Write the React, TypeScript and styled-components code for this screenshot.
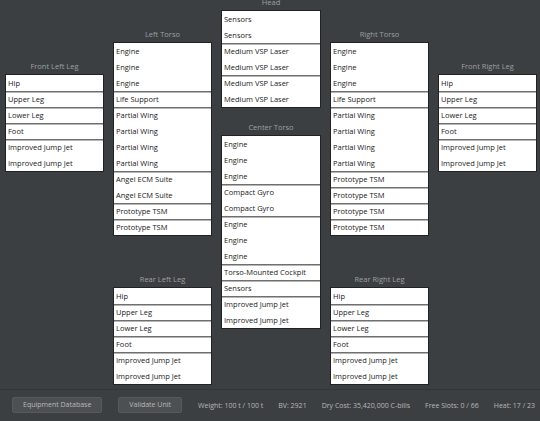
import styled, { createGlobalStyle } from 'styled-components';

type Group = [string, number];

interface Location {
  name: string;
  groups: Group[];
}

const legGroups: Group[] = [
  ['Hip', 1],
  ['Upper Leg', 1],
  ['Lower Leg', 1],
  ['Foot', 1],
  ['Improved Jump Jet', 2],
];

const columns: { offset: number; gap: number; locations: Location[] }[] = [
  {
    offset: 57,
    gap: 0,
    locations: [{ name: 'Front Left Leg', groups: legGroups }],
  },
  {
    offset: 25,
    gap: 35,
    locations: [
      {
        name: 'Left Torso',
        groups: [
          ['Engine', 3],
          ['Life Support', 1],
          ['Partial Wing', 4],
          ['Angel ECM Suite', 2],
          ['Prototype TSM', 1],
          ['Prototype TSM', 1],
        ],
      },
      { name: 'Rear Left Leg', groups: legGroups },
    ],
  },
  {
    offset: -7,
    gap: 11,
    locations: [
      {
        name: 'Head',
        groups: [
          ['Sensors', 2],
          ['Medium VSP Laser', 2],
          ['Medium VSP Laser', 2],
        ],
      },
      {
        name: 'Center Torso',
        groups: [
          ['Engine', 3],
          ['Compact Gyro', 2],
          ['Engine', 3],
          ['Torso-Mounted Cockpit', 1],
          ['Sensors', 1],
          ['Improved Jump Jet', 2],
        ],
      },
    ],
  },
  {
    offset: 25,
    gap: 35,
    locations: [
      {
        name: 'Right Torso',
        groups: [
          ['Engine', 3],
          ['Life Support', 1],
          ['Partial Wing', 4],
          ['Prototype TSM', 1],
          ['Prototype TSM', 1],
          ['Prototype TSM', 1],
          ['Prototype TSM', 1],
        ],
      },
      { name: 'Rear Right Leg', groups: legGroups },
    ],
  },
  {
    offset: 57,
    gap: 0,
    locations: [{ name: 'Front Right Leg', groups: legGroups }],
  },
];

const stats = [
  'Weight: 100 t / 100 t',
  'BV: 2921',
  'Dry Cost: 35,420,000 C-bills',
  'Free Slots: 0 / 66',
  'Heat: 17 / 23',
];

const App: React.FC = () => {
  return (
    <>
      <GlobalStyle />
      <Window>
        <Layout>
          {columns.map((col, ci) => (
            <Column key={ci} $offset={col.offset} $gap={col.gap}>
              {col.locations.map((loc) => (
                <Panel key={loc.name}>
                  <PanelTitle>{loc.name}</PanelTitle>
                  <SlotList>
                    {loc.groups.map(([label, count], gi) =>
                      Array.from({ length: count }).map((_, si) => (
                        <Slot key={`${gi}-${si}`} $groupStart={gi > 0 && si === 0}>
                          {label}
                        </Slot>
                      ))
                    )}
                  </SlotList>
                </Panel>
              ))}
            </Column>
          ))}
        </Layout>
        <StatusBar>
          <BarButton>Equipment Database</BarButton>
          <BarButton>Validate Unit</BarButton>
          {stats.map((s) => (
            <StatText key={s}>{s}</StatText>
          ))}
        </StatusBar>
      </Window>
    </>
  );
};

const GlobalStyle = createGlobalStyle`
  html, body {
    margin: 0;
    padding: 0;
    background: #3c3f41;
  }
  body {
    font-family: "Open Sans", "Noto Sans", sans-serif;
  }
`;

const Window = styled.div`
  width: 540px;
  height: 421px;
  background: #3c3f41;
  display: flex;
  flex-direction: column;
  overflow: hidden;
`;

const Layout = styled.div`
  flex: 1;
  display: grid;
  grid-template-columns: 97px 97px 98px 97px 97px;
  column-gap: 11px;
  padding-left: 6px;
  align-items: start;
  overflow: hidden;
`;

const Column = styled.div<{ $offset: number; $gap: number }>`
  display: flex;
  flex-direction: column;
  gap: ${(p) => p.$gap}px;
  margin-top: ${(p) => p.$offset}px;
`;

const Panel = styled.div`
  display: flex;
  flex-direction: column;
`;

const PanelTitle = styled.div`
  height: 18px;
  line-height: 18px;
  text-align: center;
  font-size: 7.5px;
  color: #9c9fa1;
`;

const SlotList = styled.div`
  background: #ffffff;
  box-shadow: 0 0 0 1px rgba(0, 0, 0, 0.45);
  display: flex;
  flex-direction: column;
`;

const Slot = styled.div<{ $groupStart: boolean }>`
  height: 16px;
  box-sizing: border-box;
  padding-left: 2px;
  font-size: 7.5px;
  color: #1a1a1a;
  white-space: nowrap;
  overflow: hidden;
  border-top: ${(p) => (p.$groupStart ? '1px solid #6f6f6f' : 'none')};
  box-shadow: ${(p) => (p.$groupStart ? 'inset 0 1px 0 #b5b5b5' : 'none')};
  line-height: ${(p) => (p.$groupStart ? '15px' : '16px')};
`;

const StatusBar = styled.div`
  height: 32px;
  flex-shrink: 0;
  box-sizing: border-box;
  border-top: 1px solid #333537;
  display: flex;
  align-items: center;
  gap: 15px;
  padding: 0 8px 1px 12px;
`;

const BarButton = styled.button`
  flex-shrink: 0;
  white-space: nowrap;
  height: 16px;
  padding: 0 10px;
  margin-right: 1px;
  background: #4c5052;
  border: 1px solid #55595b;
  border-radius: 2px;
  color: #b9b9b9;
  font-family: "Open Sans", "Noto Sans", sans-serif;
  font-size: 7px;
  line-height: 14px;
  cursor: pointer;
`;

const StatText = styled.span`
  flex-shrink: 0;
  font-size: 7px;
  color: #b8b8b8;
  white-space: nowrap;
`;

export default App;
